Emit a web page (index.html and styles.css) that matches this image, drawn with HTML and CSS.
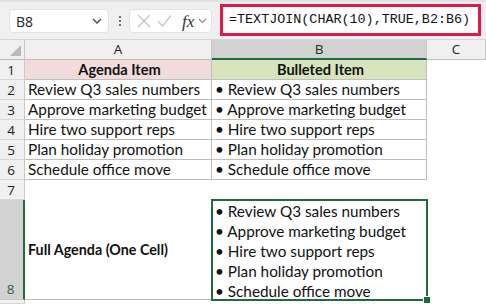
FILE: index.html
```html
<!DOCTYPE html>
<html>
<head>
<meta charset="utf-8">
<link rel="stylesheet" href="styles.css">
</head>
<body>
<div class="toolbar">
  <div class="namebox">
    <span class="nb-text">B8</span>
    <svg class="nb-chev" width="10" height="6" viewBox="0 0 10 6"><path d="M1 1 L5 5 L9 1" fill="none" stroke="#444" stroke-width="1.3"/></svg>
  </div>
  <div class="dots"><span></span><span></span><span></span></div>
  <div class="fxbox">
    <svg width="14" height="14" viewBox="0 0 14 14"><path d="M1 1 L13 13 M13 1 L1 13" stroke="#c4c4c4" stroke-width="1.2" fill="none"/></svg>
    <svg width="15" height="14" viewBox="0 0 15 14"><path d="M1 7 L5.5 12 L14 1.5" stroke="#c4c4c4" stroke-width="1.2" fill="none"/></svg>
    <span class="fx">fx</span>
    <svg width="9" height="6" viewBox="0 0 9 6"><path d="M1 1 L4.5 4.5 L8 1" fill="none" stroke="#888" stroke-width="1.1"/></svg>
  </div>
  <div class="formula">=TEXTJOIN(CHAR(10),TRUE,B2:B6)</div>
</div>
<div class="sheet">
  <div class="corner"><span class="tri"></span></div>
  <div class="colh">A</div>
  <div class="colh sel">B</div>
  <div class="colh">C</div>

  <div class="rowh">1</div>
  <div class="cell bd hdrA">Agenda Item</div>
  <div class="cell bd hdrB">Bulleted Item</div>
  <div class="cell"></div>

  <div class="rowh">2</div>
  <div class="cell bd">Review Q3 sales numbers</div>
  <div class="cell bd">• Review Q3 sales numbers</div>
  <div class="cell"></div>

  <div class="rowh">3</div>
  <div class="cell bd">Approve marketing budget</div>
  <div class="cell bd">• Approve marketing budget</div>
  <div class="cell"></div>

  <div class="rowh">4</div>
  <div class="cell bd">Hire two support reps</div>
  <div class="cell bd">• Hire two support reps</div>
  <div class="cell"></div>

  <div class="rowh">5</div>
  <div class="cell bd">Plan holiday promotion</div>
  <div class="cell bd">• Plan holiday promotion</div>
  <div class="cell"></div>

  <div class="rowh">6</div>
  <div class="cell bd">Schedule office move</div>
  <div class="cell bd">• Schedule office move</div>
  <div class="cell"></div>

  <div class="rowh">7</div>
  <div class="cell"></div>
  <div class="cell"></div>
  <div class="cell"></div>

  <div class="rowh rsel">8</div>
  <div class="cell bd full">Full Agenda (One Cell)</div>
  <div class="cell multi">
    <div>• Review Q3 sales numbers</div>
    <div>• Approve marketing budget</div>
    <div>• Hire two support reps</div>
    <div>• Plan holiday promotion</div>
    <div>• Schedule office move</div>
    <span class="handle"></span>
  </div>
  <div class="cell"></div>

  <div class="rowh"></div>
  <div class="cell"></div>
  <div class="cell"></div>
  <div class="cell"></div>
</div>
</body>
</html>
```
FILE: styles.css
```css
html, body {
  margin: 0;
  padding: 0;
  background: #ffffff;
  overflow: hidden;
}
body {
  width: 486px;
  height: 304px;
  font-family: Lato, "Open Sans", sans-serif;
  color: #111;
}
.toolbar {
  height: 40px;
  box-sizing: border-box;
  background: #f0f0f0;
  border-top: 2px solid #e2e2e2;
  border-bottom: 1px solid #d6d6d6;
  display: flex;
  align-items: flex-start;
}
.namebox {
  margin-top: 7px;
  margin-left: 9px;
  width: 100px;
  height: 24px;
  box-sizing: border-box;
  background: #fff;
  border: 1px solid #e3e3e3;
  border-radius: 4px;
  display: flex;
  align-items: center;
  justify-content: space-between;
  padding: 0 6px 0 6px;
}
.nb-text {
  font-family: "Open Sans", sans-serif;
  font-size: 14px;
  color: #222;
}
.dots {
  margin-left: 8px;
  margin-top: 14px;
  width: 5px;
  display: flex;
  flex-direction: column;
  align-items: center;
  gap: 2px;
}
.dots span {
  width: 2px;
  height: 2px;
  background: #444;
  border-radius: 1px;
}
.fxbox {
  margin-top: 7px;
  margin-left: 7px;
  width: 83px;
  height: 24px;
  box-sizing: border-box;
  background: #fff;
  border: 1px solid #e3e3e3;
  border-radius: 4px;
  display: flex;
  align-items: center;
  padding: 0 2px 0 7px;
  gap: 6px;
}
.fx {
  font-family: "Liberation Serif", serif;
  font-style: italic;
  font-size: 17px;
  color: #333;
  margin-left: 4px;
  margin-right: -2px;
  line-height: 1;
}
.formula {
  margin-left: 8px;
  margin-top: 2px;
  width: 261px;
  height: 32px;
  box-sizing: border-box;
  border: 3px solid #e0194a;
  background: #fff;
  font-family: "Liberation Mono", monospace;
  font-size: 13.4px;
  line-height: 26px;
  padding-left: 6px;
  color: #111;
  white-space: nowrap;
}
.sheet {
  display: grid;
  grid-template-columns: 25px 187px 215px 59px;
  grid-template-rows: 20px repeat(7, 20px) 100px 4px;
  font-size: 15.3px;
}
.corner {
  background: #f0f0f0;
  border-right: 1px solid #c8c8c8;
  border-bottom: 1px solid #bdbdbd;
  box-sizing: border-box;
  position: relative;
}
.tri {
  position: absolute;
  right: 3px;
  bottom: 3px;
  width: 0;
  height: 0;
  border-left: 11px solid transparent;
  border-bottom: 11px solid #b9b9b9;
}
.colh {
  background: #f0f0f0;
  border-right: 1px solid #c8c8c8;
  border-bottom: 1px solid #bdbdbd;
  box-sizing: border-box;
  text-align: center;
  font-family: "Open Sans", sans-serif;
  font-size: 13.5px;
  line-height: 19px;
  color: #222;
}
.colh.sel {
  background: #d2d2d2;
  border-bottom: 2px solid #1d6b3e;
  color: #11391f;
}
.rowh {
  background: #f0f0f0;
  border-right: 1px solid #c8c8c8;
  border-bottom: 1px solid #d8d8d8;
  box-sizing: border-box;
  text-align: center;
  font-family: "Open Sans", sans-serif;
  font-size: 13.5px;
  line-height: 20px;
  color: #222;
  padding-right: 2px;
}
.rowh.rsel {
  background: #d2d2d2;
  border-right: 2px solid #1d6b3e;
  border-bottom: 1px solid #c8c8c8;
  color: #1d6b3e;
  display: flex;
  align-items: flex-end;
  justify-content: center;
  line-height: 19px;
}
.cell {
  box-sizing: border-box;
  padding-left: 3px;
  line-height: 19px;
  white-space: nowrap;
  overflow: hidden;
}
.bd {
  border-right: 1px solid #bfbfbf;
  border-bottom: 1px solid #bfbfbf;
}
.hdrA {
  background: #f2dcdb;
  font-weight: bold;
  font-size: 14.6px;
  text-align: center;
}
.hdrB {
  background: #d8e4bc;
  font-weight: bold;
  font-size: 14.6px;
  text-align: center;
}
.full {
  font-weight: bold;
  font-size: 14.3px;
  display: flex;
  align-items: center;
}
.multi {
  position: relative;
  overflow: visible;
  padding-top: 1px;
  line-height: 20px;
  outline: 2px solid #1d6b3e;
  outline-offset: -1px;
}
.handle {
  position: absolute;
  right: -4px;
  bottom: -4px;
  width: 6px;
  height: 6px;
  background: #1d6b3e;
  border: 1px solid #fff;
}
```
